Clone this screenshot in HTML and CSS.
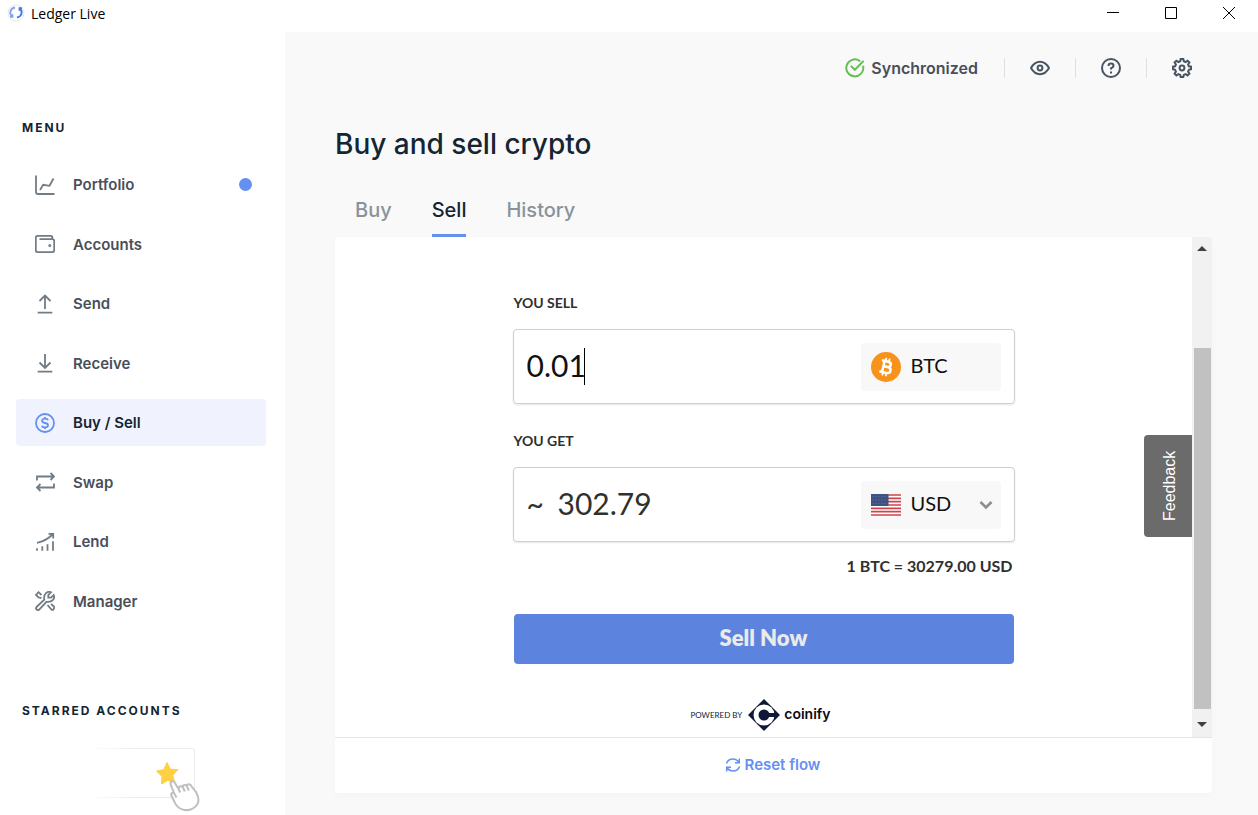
FILE: index.html
```html
<!DOCTYPE html>
<html lang="en">
<head>
    <meta charset="UTF-8">
    <meta name="viewport" content="width=device-width, initial-scale=1.0">
    <title>Ledger Live</title>
    <link rel="stylesheet" href="styles.css">
</head>
<body>
    <header class="titlebar">
        <svg class="app-icon" width="18" height="18" viewBox="0 0 18 18" fill="none">
            <circle cx="9" cy="9" r="8" stroke="#e8e8e8" stroke-width="1"/>
            <path d="M8 3.500C3 4.500 2 9.500 5 12.500M3 12.800h2.500v-2.600" stroke="#7fa2f4" stroke-width="1.800"/>
            <path d="M10 13.500C15 12.500 16 7.500 13 4.500M15 4.200h-2.500v2.600" stroke="#4674ea" stroke-width="1.800"/>
        </svg>
        <span class="app-name">Ledger Live</span>
        <div class="window-buttons">
            <button aria-label="Minimize"><svg width="12" height="12" viewBox="0 0 12 12" stroke="#000"><path d="M0 5.500h12"/></svg></button>
            <button aria-label="Maximize"><svg width="12" height="12" viewBox="0 0 12 12" stroke="#000" fill="none"><path d="M.5.5h11v11H.5z"/></svg></button>
            <button aria-label="Close"><svg width="12" height="12" viewBox="0 0 12 12" stroke="#000"><path d="M0 0l12 12M12 0L0 12"/></svg></button>
        </div>
    </header>

    <div class="app">
        <aside class="sidebar">
            <h2 class="side-title">MENU</h2>
            <nav class="menu">
                <a href="#" class="menu-item">
                    <svg class="icon" viewBox="0 0 20 20"><path d="M1 .5v16.500q0 2 2 2H19.500M5 15l3.200-5.200 6.300 1L18.500 3.500"/></svg>
                    Portfolio
                    <span class="dot"></span>
                </a>
                <a href="#" class="menu-item">
                    <svg class="icon" viewBox="0 0 20 20"><path d="M17.300 4.500V3.500Q17.300 1.800 15.600 1.800H2.700Q.8 1.800.8 3.700V16.200Q.8 18.200 2.800 18.200H17.200Q19.200 18.200 19.200 16.200V7.200Q19.200 5.200 17.200 5.200H4.500"/><circle cx="14.800" cy="11.500" r=".6"/></svg>
                    Accounts
                </a>
                <a href="#" class="menu-item">
                    <svg class="icon" viewBox="0 0 20 20"><path d="M10 15V1.500M4.500 7L10 1.500 15.500 7M2.700 18.700h14.600"/></svg>
                    Send
                </a>
                <a href="#" class="menu-item">
                    <svg class="icon" viewBox="0 0 20 20"><path d="M10 1v14M4.500 9.500L10 15l5.500-5.500M2.700 18.700h14.600"/></svg>
                    Receive
                </a>
                <a href="#" class="menu-item active">
                    <svg class="icon" viewBox="0 0 20 20"><circle cx="10" cy="10" r="9"/><path d="M13 7.300Q12.500 5.700 10 5.700T7 7.800Q7 9.500 10 10t3 2.200q0 2.100-3 2.100T7 12.700M10 4v1.700M10 14.300V16"/></svg>
                    Buy / Sell
                </a>
                <a href="#" class="menu-item">
                    <svg class="icon" viewBox="0 0 20 20"><path d="M2 8.500V4.500h17M15.500 1L19 4.500 15.500 8M19 11.500v4H2M5.500 12L2 15.500 5.500 19"/></svg>
                    Swap
                </a>
                <a href="#" class="menu-item">
                    <svg class="icon" viewBox="0 0 20 20"><path d="M2 18.800v-2.500M7.300 18.800v-4.500M12.500 18.800v-6.500M18 18.800v-9.500M2 10.800Q11 9 17.500 2.500M13.500 1.800h4.700v4.700"/></svg>
                    Lend
                </a>
                <a href="#" class="menu-item">
                    <svg class="icon" viewBox="0 0 20 20"><path d="M1.500 16l7.800-7.300Q8.500 4.500 11 2.200T16 1.300L13.300 4v2.700H16L18.700 4Q20 7 17.700 9.200 15.500 11.500 11.500 10.800L4.200 18.500Q3 19.700 1.700 18.500T1.500 16zM6.500 7.200L3.500 6.500 1 4 3.500 1.200 6.500 4M12.500 14l4 4.500Q17.500 19.300 18.500 18.300t.5-2.800L16 13"/></svg>
                    Manager
                </a>
            </nav>
            <h2 class="side-title starred-title">STARRED ACCOUNTS</h2>
            <svg class="starred-art" width="120" height="66" viewBox="0 0 120 66" fill="none">
                <defs>
                    <linearGradient id="fade" x1="0" x2="1" y1="0" y2="0">
                        <stop offset="0" stop-color="#ebebeb" stop-opacity="0"/>
                        <stop offset=".5" stop-color="#ebebeb"/>
                    </linearGradient>
                </defs>
                <path d="M2 2.500H107q2.500 0 2.500 2.500V49q0 2.500-2.500 2.500H2" stroke="url(#fade)"/>
                <path d="M82 16.500l3.400 6.700 7.600.4-5.200 5.600 2 7.800L83 34.300 76.500 38 77 30.500 71.500 25.100l7.300-1.600z" fill="#ffd142" stroke="#ffd142" stroke-linejoin="round"/>
                <path d="M89 47L85.500 38Q85.200 35.500 87.200 35.200T90 37l3.800 6.500V41.300q2-2.300 4 0v-1.500q2.200-2 4.200.5v-1.500q3-1.500 4.500 1.500L111 46Q115 53.500 112.500 58 108 65 99.500 64 92 62.500 89.500 56L86.300 49.300Q85.700 46.200 89 47l2.500 4.500M98 41.500l1.800 4M102 40.500l1.800 4M93.800 43.500l1.400 3" fill="#fff" stroke="#bfbfbf" stroke-width="2" stroke-linejoin="round"/>
            </svg>
        </aside>

        <main class="main">
            <div class="topbar">
                <div class="sync">
                    <svg width="20" height="20" viewBox="0 0 20 20" fill="none" stroke="#66be54" stroke-width="2" stroke-linecap="round"><path d="M18.200 8.500A8.500 8.500 0 1 1 14.500 2.800M6.500 8.500l3.300 3.300L18 3.500"/></svg>
                    Synchronized
                </div>
                <button aria-label="Hide balances"><svg width="20" height="20" viewBox="0 0 20 20"><path d="M1 10Q4.500 3.800 10 3.800T19 10Q15.500 16.200 10 16.200T1 10z"/><circle cx="10" cy="10" r="2.400"/></svg></button>
                <button aria-label="Help"><svg width="20" height="20" viewBox="0 0 20 20"><circle cx="10" cy="10" r="9"/><path d="M7.500 8Q7.500 5.600 10 5.600T12.500 7.800Q12.500 9.200 10 10.300V11.600M10 13.400V15.400"/></svg></button>
                <button aria-label="Settings"><svg width="20" height="20" viewBox="0 0 20 20"><path d="M8.200 3.200L8.700 1h2.600l.5 2.200 1.800.8 2-1.300 1.800 1.800-1.300 2 .8 1.800 2.100.4v2.600l-2.100.5-.8 1.800 1.300 2-1.800 1.800-2-1.300-1.800.8-.5 2.100H8.700l-.5-2.100-1.800-.8-2 1.300-1.800-1.800 1.300-2-.8-1.800L1 11.300V8.700l2.100-.4.8-1.800-1.300-2 1.800-1.800 2 1.300z"/><circle cx="10" cy="10" r="2.400"/></svg></button>
            </div>

            <h1>Buy and sell crypto</h1>

            <nav class="tabs">
                <a href="#">Buy</a>
                <a href="#" class="current">Sell</a>
                <a href="#">History</a>
            </nav>

            <section class="card">
                <div class="frame">
                    <form class="widget">
                        <label for="sellAmount">YOU SELL</label>
                        <div class="field">
                            <input type="text" id="sellAmount" class="amount sell-amount" value="0.01">
                            <span class="caret"></span>
                            <div class="currency">
                                <svg class="coin" width="30" height="30" viewBox="0 0 30 30">
                                    <circle cx="15" cy="15" r="15" fill="#f7931a"/>
                                    <g transform="rotate(13 15 15)" fill="none" stroke="#fff" stroke-width="2.500">
                                        <path d="M9.500 9.300H16q3.200 0 3.200 2.700T16 14.700H12.200M12.200 14.700h4.500q3.500 0 3.500 3T16.700 20.700H9.500M12.300 9v12"/>
                                        <path d="M13.300 6v3.500M16.800 6v3.500M13.300 20.500V24M16.800 20.500V24" stroke-width="1.800"/>
                                    </g>
                                </svg>
                                <span class="code">BTC</span>
                            </div>
                        </div>

                        <label for="getAmount">YOU GET</label>
                        <div class="field">
                            <span class="approx">~</span>
                            <input type="text" id="getAmount" class="amount get-amount" value="302.79" readonly>
                            <div class="currency-select">
                                <svg class="flag" width="30" height="22" viewBox="0 0 30 22">
                                    <path fill="#fff" d="M0 0h30v22H0z"/>
                                    <path d="M0 1h30M0 4.300h30M0 7.700h30M0 11h30M0 14.300h30M0 17.700h30M0 21h30" stroke="#d0424e" stroke-width="1.700"/>
                                    <path fill="#3f5283" d="M0 0h17.500v12H0z"/>
                                    <path d="M1.500 2.500h15M1.500 6h15M1.500 9.500h15" stroke="#62739f" stroke-dasharray="1 2"/>
                                </svg>
                                <select aria-label="Currency">
                                    <option>USD</option>
                                    <option>EUR</option>
                                    <option>GBP</option>
                                </select>
                                <svg class="chevron" width="14" height="10" viewBox="0 0 14 10" fill="none" stroke="#8c8c8c" stroke-width="2.500"><path d="M1.500 2L7 7.500 12.500 2"/></svg>
                            </div>
                        </div>

                        <p class="rate">1 BTC = 30279.00 USD</p>
                        <button type="button" class="sell-now">Sell Now</button>
                        <div class="powered">
                            <span class="powered-by">POWERED BY</span>
                            <svg width="32" height="32" viewBox="0 0 32 32">
                                <path fill="#0f1937" d="M16 0l16 16-16 16L0 16z"/>
                                <circle cx="16" cy="16" r="10.500" fill="#fff"/>
                                <circle cx="16" cy="16" r="5.500" fill="#0f1937"/>
                                <path fill="#0f1937" d="M16 14h12v4H16z"/>
                            </svg>
                            <span class="coinify">coinify</span>
                        </div>
                    </form>
                    <button class="feedback">Feedback</button>
                    <div class="scrollbar">
                        <span class="arrow up"></span>
                        <span class="thumb"></span>
                        <span class="arrow down"></span>
                    </div>
                </div>
                <footer class="card-footer">
                    <button class="reset">
                        <svg width="16" height="16" viewBox="0 0 16 16" fill="none" stroke="#6490f1" stroke-width="1.500"><path d="M1.500 6.500Q3 2 8 2q3.700 0 6 3.500M14.300 1.500v4.300H10M14.500 9.500Q13 14 8 14q-3.700 0-6-3.500M1.700 14.500v-4.300H6"/></svg>
                        Reset flow
                    </button>
                </footer>
            </section>
        </main>
    </div>
</body>
</html>
```
FILE: styles.css
```css
* {
    box-sizing: border-box;
}
body {
    display: flex;
    flex-direction: column;
    min-height: 100vh;
    margin: 0;
    background: #fff;
    color: #142533;
    font-family: Inter, sans-serif;
}
button {
    padding: 0;
    border: none;
    background: none;
    cursor: pointer;
}
a {
    text-decoration: none;
}

/* window title bar */
.titlebar {
    display: flex;
    align-items: center;
    height: 32px;
    padding: 0 0 6px 7px;
}
.app-name {
    margin-left: 6px;
    color: #000;
    font-family: "Open Sans", sans-serif;
    font-size: 14px;
}
.window-buttons {
    display: flex;
    margin-left: auto;
}
.window-buttons button {
    display: flex;
    align-items: center;
    justify-content: center;
    width: 58px;
    height: 26px;
}

.app {
    display: flex;
    flex: 1;
}

/* sidebar */
.sidebar {
    width: 285px;
    padding: 88px 19px 0 16px;
}
.side-title {
    margin: 0 6px;
    font-size: 12px;
    line-height: 16px;
    font-weight: 700;
    letter-spacing: 2px;
}
.menu {
    display: flex;
    flex-direction: column;
    justify-content: space-between;
    height: 464px;
    margin-top: 25px;
}
.menu-item {
    display: flex;
    align-items: center;
    height: 47px;
    padding: 0 14px 0 19px;
    border-radius: 4px;
    color: #484f59;
    font-size: 15px;
    font-weight: 600;
}
.menu-item.active {
    background: #f0f3fe;
    color: #142533;
}
.icon {
    width: 20px;
    height: 20px;
    margin-right: 18px;
    fill: none;
    stroke: #727c84;
    stroke-width: 1.8;
}
.active .icon {
    stroke: #6490f1;
}
.dot {
    width: 13px;
    height: 13px;
    margin-left: auto;
    border-radius: 50%;
    background: #6490f1;
}
.starred-title {
    margin-top: 78px;
}
.starred-art {
    display: block;
    margin: 27px 0 0 69px;
}

/* main area */
.main {
    display: flex;
    flex: 1;
    flex-direction: column;
    padding: 0 46px 22px 50px;
    background: #f9f9f9;
}
.topbar {
    display: flex;
    align-items: center;
    justify-content: flex-end;
    height: 72px;
    margin-right: -5px;
}
.sync {
    display: flex;
    align-items: center;
    gap: 6px;
    padding-right: 26px;
    color: #484f59;
    font-size: 16px;
    font-weight: 600;
}
.topbar button {
    display: flex;
    align-items: center;
    justify-content: center;
    width: 71px;
    height: 20px;
    border-left: 1px solid #dedfe1;
}
.topbar button svg {
    fill: none;
    stroke: #475462;
    stroke-width: 2;
}
h1 {
    margin: 20px 0 0;
    font-size: 28px;
    line-height: 40px;
    font-weight: 500;
}
.tabs {
    display: flex;
    gap: 40px;
    margin-top: 20px;
    padding-left: 20px;
}
.tabs a {
    height: 53px;
    color: #8a9299;
    font-size: 20px;
    line-height: 52px;
    font-weight: 500;
}
.tabs .current {
    border-bottom: 3px solid #6490f1;
    color: #142533;
}
.card {
    display: flex;
    flex: 1;
    flex-direction: column;
    border-radius: 4px;
    background: #fff;
    box-shadow: 0 4px 8px rgba(0, 0, 0, 0.02);
}
.frame {
    display: flex;
    position: relative;
    flex: 1;
    border-bottom: 1px solid #e3e4e6;
}

/* sell form */
.widget {
    width: 100%;
    max-width: 502px;
    margin: 0 auto;
    padding: 56px 0 6px;
    color: #303030;
    font-family: Lato, sans-serif;
}
.widget label {
    display: block;
    padding-left: 1px;
    font-size: 14px;
    line-height: 20px;
    font-weight: 700;
}
.field {
    display: flex;
    align-items: center;
    height: 75px;
    margin: 16px 0 27px;
    padding: 0 13px;
    border: 1px solid #cfcfcf;
    border-radius: 4px;
    box-shadow: 0 1px 2px rgba(0, 0, 0, 0.1);
}
.amount {
    height: 40px;
    padding: 0 0 4px;
    border: none;
    outline: none;
    background: none;
    color: inherit;
    font-family: inherit;
    font-size: 30px;
}
.sell-amount {
    width: 57px;
    color: #111;
}
.get-amount {
    width: 200px;
}
.approx {
    width: 31px;
    padding-bottom: 4px;
    font-size: 30px;
}
.caret {
    width: 1px;
    height: 37px;
    background: #000;
}
.currency,
.currency-select {
    position: relative;
    width: 140px;
    height: 48px;
    margin-left: auto;
    border-radius: 4px;
    background: #f8f8f8;
    color: #111;
    font-size: 20px;
}
.currency {
    display: flex;
    align-items: center;
    gap: 10px;
    padding-left: 10px;
}
.code {
    padding-bottom: 3px;
}
.currency-select select {
    width: 100%;
    height: 100%;
    padding: 0 34px 3px 50px;
    border: none;
    background: none;
    color: inherit;
    font: inherit;
    appearance: none;
}
.flag {
    position: absolute;
    top: 13px;
    left: 10px;
}
.chevron {
    position: absolute;
    top: 19px;
    right: 8px;
}
.rate {
    margin: -13px 2px 38px 0;
    font-size: 16px;
    line-height: 20px;
    font-weight: 700;
    text-align: right;
}
.sell-now {
    display: block;
    width: calc(100% - 2px);
    height: 50px;
    margin: 0 1px;
    padding-bottom: 3px;
    border-radius: 4px;
    background: #5c83de;
    color: #eaeaea;
    font-family: Lato, sans-serif;
    font-size: 22px;
    font-weight: 800;
}
.powered {
    display: flex;
    align-items: center;
    justify-content: center;
    margin-top: 35px;
    padding-right: 6px;
    color: #0f1937;
}
.powered-by {
    margin-right: 6px;
    font-size: 8px;
}
.coinify {
    margin-left: 4px;
    padding-bottom: 3px;
    color: #0a0a14;
    font-family: Inter, sans-serif;
    font-size: 14px;
    font-weight: 600;
}
.feedback {
    position: absolute;
    top: 198px;
    right: 20px;
    width: 48px;
    height: 102px;
    padding-right: 3px;
    border-radius: 0 4px 4px 0;
    background: #6b6b6b;
    color: #fff;
    font-family: "Liberation Sans", sans-serif;
    font-size: 16px;
    writing-mode: vertical-rl;
    transform: rotate(180deg);
}

/* scrollbar */
.scrollbar {
    display: flex;
    flex-direction: column;
    align-items: center;
    width: 20px;
    background: #f1f1f1;
}
.arrow {
    border: 5px solid transparent;
}
.arrow.up {
    margin: 4px 0 97px;
    border-bottom-color: #404040;
}
.arrow.down {
    margin: 13px 0 5px;
    border-top-color: #404040;
}
.thumb {
    flex: 1;
    width: 17px;
    background: #c1c1c1;
}

.card-footer {
    display: flex;
    align-items: center;
    justify-content: center;
    height: 55px;
    padding: 0 2px 2px 0;
}
.reset {
    display: flex;
    align-items: center;
    gap: 4px;
    color: #6490f1;
    font-family: inherit;
    font-size: 15px;
    font-weight: 600;
}
```
